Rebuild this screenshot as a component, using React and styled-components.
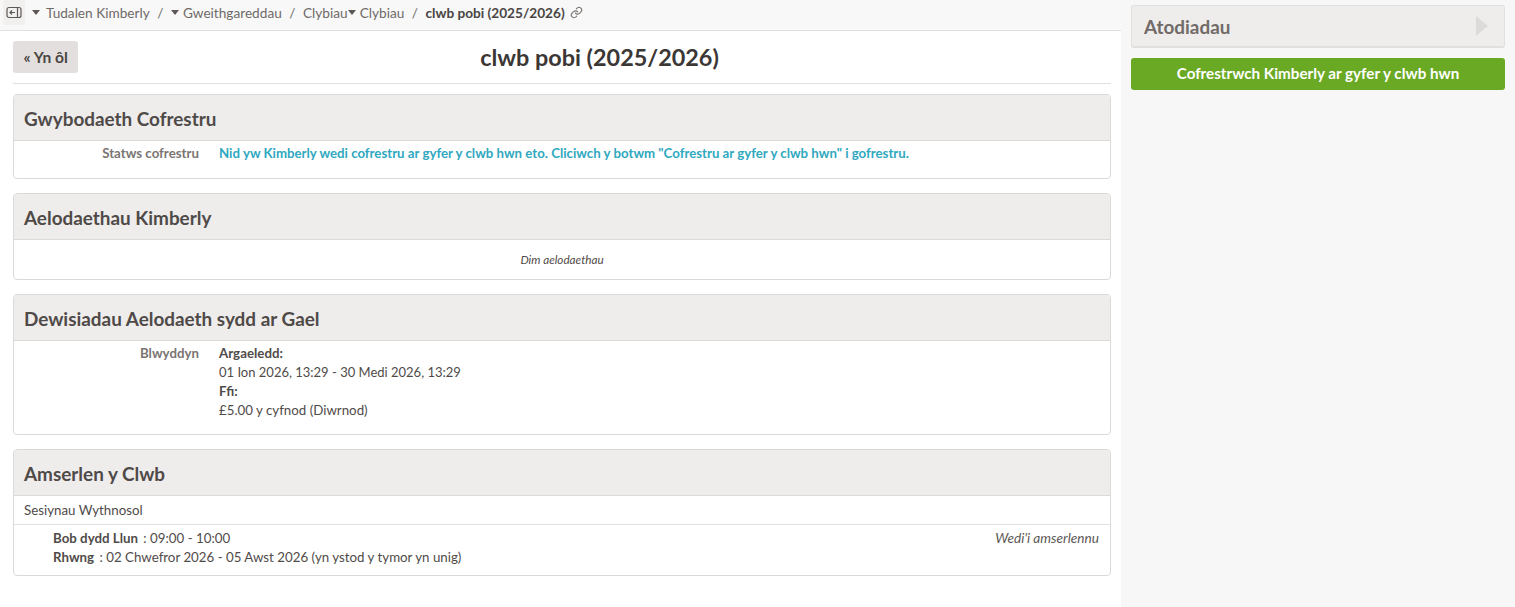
import React from "react";
import styled, { createGlobalStyle } from "styled-components";

const Global = createGlobalStyle`
  html, body { margin: 0; padding: 0; background: #fff; }
  body { font-family: "Lato", "Noto Sans", sans-serif; font-size: 13.3px; color: #504b49; }
  * { box-sizing: border-box; }
`;

const Page = styled.div`
  display: grid;
  grid-template-columns: 1121px 394px;
  height: 607px;
  overflow: hidden;
`;
const Main = styled.main`
  display: flex;
  flex-direction: column;
  min-width: 0;
`;
const Crumbs = styled.nav`
  display: flex;
  align-items: center;
  height: 31px;
  padding: 0 0 5px 0;
  background: #f8f8f8;
  border-bottom: 1px solid #e2e0df;
  color: #6f6a67;
  font-size: 13.65px;
  white-space: nowrap;
`;
const Toggle = styled.span`
  display: flex;
  align-items: center;
  justify-content: center;
  width: 22px;
  height: 25px;
  margin-left: 3px;
  border-radius: 3px;
  background: #f1f0ef;
  color: #5d5856;
`;
const Caret = styled.i`
  display: inline-block;
  width: 0;
  height: 0;
  margin: 0 ${(p) => p.$right ?? 4}px 0 ${(p) => p.$left ?? 0}px;
  border-left: 4.5px solid transparent;
  border-right: 4.5px solid transparent;
  border-top: 5px solid #5d5856;
`;
const Sep = styled.span`
  margin: 0 7.5px;
`;
const Current = styled.strong`
  color: #4a4543;
  font-weight: 700;
`;
const LinkMark = styled.span`
  display: inline-flex;
  margin-left: 5px;
  color: #7d7875;
`;
const Content = styled.div`
  display: flex;
  flex-direction: column;
  gap: 14px;
  padding: 10px 10px 0 13px;
`;
const TitleRow = styled.header`
  position: relative;
  display: flex;
  justify-content: center;
  align-items: center;
  height: 43px;
  margin-bottom: -4px;
  padding: 0 0 10px 75px;
  border-bottom: 1px solid #e2e0df;
`;
const BackBtn = styled.a`
  position: absolute;
  left: 0;
  top: 0;
  display: flex;
  align-items: center;
  height: 32px;
  padding: 0 10.5px;
  background: #e2dfde;
  border-radius: 3px;
  color: #4a4543;
  font-weight: 700;
  font-size: 15.6px;
`;
const Title = styled.h1`
  margin: 0;
  font-size: 23.4px;
  line-height: 32px;
  font-weight: 700;
  color: #3b3735;
`;
const Card = styled.section`
  border: 1px solid #dcdad9;
  border-radius: 4px;
  overflow: hidden;
  background: #fff;
`;
const CardHead = styled.h2`
  margin: 0;
  height: 46px;
  padding: 2px 10px 0;
  display: flex;
  align-items: center;
  background: #eeedec;
  border-bottom: 1px solid #dcdad9;
  font-size: 18.9px;
  font-weight: 700;
  color: #4f4a48;
`;
const Row = styled.div`
  display: grid;
  grid-template-columns: 185px 1fr;
  column-gap: 20px;
  padding: ${(p) => p.$pad};
  line-height: 19px;
`;
const Label = styled.div`
  text-align: right;
  font-weight: 700;
  color: #7a7572;
  font-size: 13.3px;
`;
const Status = styled.div`
  font-weight: 700;
  font-size: 13.25px;
  color: #2fa8c0;
`;
const Empty = styled.div`
  padding: 12px 0 13px;
  text-align: center;
  font-style: italic;
  font-size: 11.7px;
  line-height: 14px;
`;
const Line = styled.div`
  line-height: 19px;
  font-size: ${(p) => (p.$tight ? "13px" : "inherit")};
`;
const Term = styled.strong`
  margin-right: 2px;
`;
const SubHead = styled.div`
  padding: 5px 10px 4px;
  line-height: 19px;
  border-bottom: 1px solid #e2e0df;
`;
const Session = styled.div`
  display: flex;
  justify-content: space-between;
  padding: 4px 11px 8px 39px;
  line-height: 19px;
`;
const Scheduled = styled.em`
  color: #5d5856;
  font-size: 13.65px;
`;
const Side = styled.aside`
  display: flex;
  flex-direction: column;
  gap: 10px;
  padding: 5px 10px 0;
  background: #f7f7f7;
`;
const Panel = styled.div`
  display: flex;
  align-items: center;
  justify-content: space-between;
  height: 43px;
  padding: 0 16px 0 12px;
  background: #eeedec;
  border: 1px solid #e2e0df;
  border-bottom-width: 2px;
  border-radius: 3px;
  font-size: 18.9px;
  font-weight: 700;
  color: #716b68;
`;
const Arrow = styled.i`
  width: 0;
  height: 0;
  border-top: 10px solid transparent;
  border-bottom: 10px solid transparent;
  border-left: 12px solid #dddbda;
`;
const Register = styled.a`
  display: flex;
  align-items: center;
  justify-content: center;
  height: 32px;
  padding-bottom: 3px;
  background: #6aa923;
  border-radius: 3px;
  color: #fff;
  font-weight: 700;
  font-size: 15.2px;
`;

const SidebarIcon = () => (
  <svg width="16" height="13" viewBox="0 0 16 13" fill="none" stroke="currentColor" strokeWidth="1.2">
    <rect x="1" y="1.5" width="14" height="10" rx="2" />
    <path d="M11.5 1.5v10" />
    <path d="M9 6.5H4M6 4.5l-2 2 2 2" />
  </svg>
);
const ChainIcon = () => (
  <svg width="13" height="13" viewBox="0 0 24 24" fill="none" stroke="currentColor" strokeWidth="2.2" strokeLinecap="round" strokeLinejoin="round">
    <path d="M10 13a5 5 0 0 0 7.5.5l3-3a5 5 0 0 0-7-7l-1.7 1.7" />
    <path d="M14 11a5 5 0 0 0-7.5-.5l-3 3a5 5 0 0 0 7 7l1.7-1.7" />
  </svg>
);

export default function App() {
  return (
    <>
      <Global />
      <Page>
        <Main>
          <Crumbs>
            <Toggle><SidebarIcon /></Toggle>
            <Caret $left={7} $right={6} />
            <span>Tudalen Kimberly</span>
            <Sep>/</Sep>
            <Caret />
            <span>Gweithgareddau</span>
            <Sep>/</Sep>
            <span>Clybiau</span>
            <Caret />
            <span>Clybiau</span>
            <Sep>/</Sep>
            <Current>clwb pobi (2025/2026)</Current>
            <LinkMark><ChainIcon /></LinkMark>
          </Crumbs>
          <Content>
            <TitleRow>
              <BackBtn>« Yn ôl</BackBtn>
              <Title>clwb pobi (2025/2026)</Title>
            </TitleRow>
            <Card>
              <CardHead>Gwybodaeth Cofrestru</CardHead>
              <Row $pad="3px 0 15px">
                <Label>Statws cofrestru</Label>
                <Status>Nid yw Kimberly wedi cofrestru ar gyfer y clwb hwn eto. Cliciwch y botwm "Cofrestru ar gyfer y clwb hwn" i gofrestru.</Status>
              </Row>
            </Card>
            <Card>
              <CardHead>Aelodaethau Kimberly</CardHead>
              <Empty>Dim aelodaethau</Empty>
            </Card>
            <Card>
              <CardHead>Dewisiadau Aelodaeth sydd ar Gael</CardHead>
              <Row $pad="3px 0 14px">
                <Label>Blwyddyn</Label>
                <div>
                  <Line><strong>Argaeledd:</strong></Line>
                  <Line $tight>01 Ion 2026, 13:29 - 30 Medi 2026, 13:29</Line>
                  <Line><strong>Ffi:</strong></Line>
                  <Line>£5.00 y cyfnod (Diwrnod)</Line>
                </div>
              </Row>
            </Card>
            <Card>
              <CardHead>Amserlen y Clwb</CardHead>
              <SubHead>Sesiynau Wythnosol</SubHead>
              <Session>
                <div>
                  <Line><Term>Bob dydd Llun</Term> : 09:00 - 10:00</Line>
                  <Line><Term>Rhwng</Term> : 02 Chwefror 2026 - 05 Awst 2026 (yn ystod y tymor yn unig)</Line>
                </div>
                <Scheduled>Wedi'i amserlennu</Scheduled>
              </Session>
            </Card>
          </Content>
        </Main>
        <Side>
          <Panel>Atodiadau<Arrow /></Panel>
          <Register>Cofrestrwch Kimberly ar gyfer y clwb hwn</Register>
        </Side>
      </Page>
    </>
  );
}
